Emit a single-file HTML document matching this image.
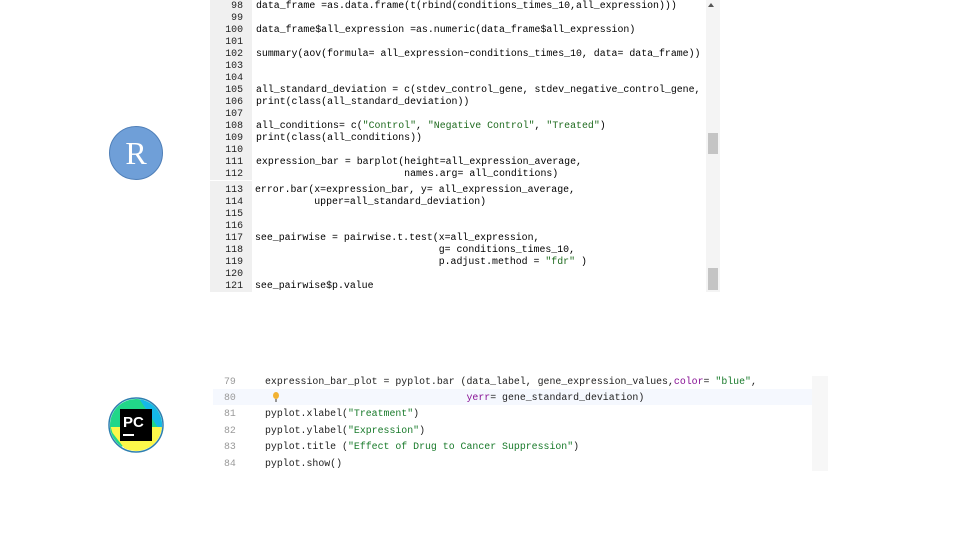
<!DOCTYPE html>
<html><head><style>
body{margin:0;width:960px;height:540px;background:#fff;position:relative;overflow:hidden;font-family:"Liberation Mono",monospace;}
.l{position:absolute;font-size:9.9px;line-height:12px;white-space:pre;color:#000;}
.n{position:absolute;font-size:9.9px;line-height:12px;width:34px;text-align:right;color:#222;}
.g{color:#1f6b1f}
.p{position:absolute;font-size:9.9px;line-height:16px;white-space:pre;color:#222;}
.pn{position:absolute;font-size:9.9px;line-height:16px;color:#9a9a9a;left:224px;}
.s{color:#187a2a}.k{color:#871094}
</style></head><body>
<div style="position:absolute;left:210px;top:0;width:42px;height:292px;background:#f0f0f0"></div>
<div style="position:absolute;left:252px;top:0;width:468px;height:292px;background:#fff"></div>
<div style="position:absolute;left:706px;top:0;width:14px;height:292px;background:#f4f4f4"></div>
<div style="position:absolute;left:708px;top:133px;width:10px;height:21px;background:#c4c4c4"></div>
<div style="position:absolute;left:708px;top:268px;width:10px;height:22px;background:#c4c4c4"></div>
<div style="position:absolute;left:708px;top:3px;width:0;height:0;border-left:3px solid transparent;border-right:3px solid transparent;border-bottom:4px solid #555"></div>
<div style="position:absolute;left:210px;top:180px;width:42px;height:1px;background:#fff"></div>

<div id="r"></div>
<script>
var L=[["98","data_frame =as.data.frame(t(rbind(conditions_times_10,all_expression)))"],["99",""],["100","data_frame$all_expression =as.numeric(data_frame$all_expression)"],["101",""],["102","summary(aov(formula= all_expression~conditions_times_10, data= data_frame))"],["103",""],["104",""],["105","all_standard_deviation = c(stdev_control_gene, stdev_negative_control_gene,"],["106","print(class(all_standard_deviation))"],["107",""],["108",'all_conditions= c(<span class="g">"Control"</span>, <span class="g">"Negative Control"</span>, <span class="g">"Treated"</span>)'],["109","print(class(all_conditions))"],["110",""],["111","expression_bar = barplot(height=all_expression_average,"],["112","                         names.arg= all_conditions)"],["113","error.bar(x=expression_bar, y= all_expression_average,"],["114","          upper=all_standard_deviation)"],["115",""],["116",""],["117","see_pairwise = pairwise.t.test(x=all_expression,"],["118","                               g= conditions_times_10,"],["119",'                               p.adjust.method = <span class="g">"fdr"</span> )'],["120",""],["121","see_pairwise$p.value"]];
var h="";
L.forEach(function(a,i){var y=(i<15?5+i*12:189+(i-15)*12)-5;
h+='<div class="n" style="left:209px;top:'+y+'px">'+a[0]+'</div><div class="l" style="left:'+(i<15?256:255)+'px;top:'+y+'px">'+a[1]+'</div>';});
document.getElementById("r").innerHTML=h;
</script>

<div style="position:absolute;left:109px;top:126px;width:52px;height:52px;border-radius:50%;background:#6f9fd8;border:1px solid #4f7fb8;color:#fff;font-family:'Liberation Serif',serif;font-size:32px;line-height:52px;text-align:center">R</div>

<div style="position:absolute;left:213px;top:389px;width:600px;height:16px;background:#f5f8fe"></div>
<div style="position:absolute;left:812px;top:376px;width:16px;height:95px;background:#f7f7f7"></div>
<div class="pn" style="top:374px">79</div>
<div class="p" style="left:265px;top:374px">expression_bar_plot = pyplot.bar (data_label, gene_expression_values,<span class="k">color</span>= <span class="s">"blue"</span>,</div>
<div class="pn" style="top:390px">80</div>
<div style="position:absolute;left:273px;top:392px;width:6px;height:7px;border-radius:50%;background:#f2b233"></div>
<div style="position:absolute;left:275px;top:399px;width:2px;height:3px;background:#999"></div>
<div class="p" style="left:265px;top:390px">                                  <span class="k">yerr</span>= gene_standard_deviation)</div>
<div class="pn" style="top:406px">81</div>
<div class="p" style="left:265px;top:406px">pyplot.xlabel(<span class="s">"Treatment"</span>)</div>
<div class="pn" style="top:423px">82</div>
<div class="p" style="left:265px;top:423px">pyplot.ylabel(<span class="s">"Expression"</span>)</div>
<div class="pn" style="top:439px">83</div>
<div class="p" style="left:265px;top:439px">pyplot.title (<span class="s">"Effect of Drug to Cancer Suppression"</span>)</div>
<div class="pn" style="top:456px">84</div>
<div class="p" style="left:265px;top:456px">pyplot.show()</div>

<svg style="position:absolute;left:108px;top:397px" width="56" height="56" viewBox="0 0 56 56">
<circle cx="28" cy="28" r="27" fill="#fff" stroke="#2e7fb0" stroke-width="1.5"/>
<clipPath id="c"><circle cx="28" cy="28" r="26"/></clipPath>
<g clip-path="url(#c)">
<polygon points="0,0 56,0 56,30 0,56" fill="#21d789"/>
<polygon points="30,0 56,0 56,40" fill="#15b9e8"/>
<polygon points="0,30 20,56 56,56 56,30" fill="#fcf84a"/>
<polygon points="0,20 10,56 0,56" fill="#21d789"/>
</g>
<rect x="12" y="12" width="32" height="32" fill="#000"/>
<text x="15" y="30" font-family="Liberation Sans" font-weight="bold" font-size="15" fill="#fff">PC</text>
<rect x="15" y="37" width="11" height="2" fill="#fff"/>
</svg>
</body></html>
